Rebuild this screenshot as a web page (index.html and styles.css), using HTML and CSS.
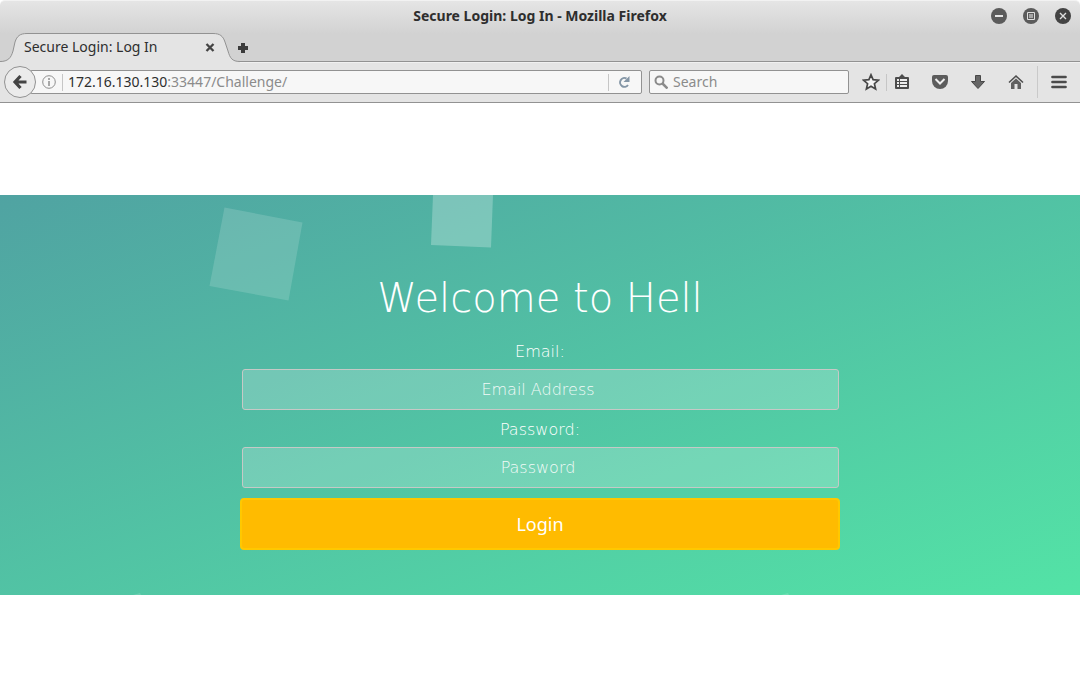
FILE: index.html
```html
<!DOCTYPE html>
<html lang="en">
<head>
<meta charset="utf-8">
<title>Secure Login: Log In</title>
<link rel="stylesheet" href="styles.css">
</head>
<body>
<header class="browser">
  <div class="top">
    <div class="titlebar">
      <span class="window-title">Secure Login: Log In - Mozilla Firefox</span>
      <div class="window-buttons">
        <button class="bare" aria-label="Minimize"><svg width="16" height="16"><circle cx="8" cy="8" r="8" fill="#5b5b5b"/><path d="M4 8h8" stroke="#e6e6e6" stroke-width="2"/></svg></button>
        <button class="bare" aria-label="Maximize"><svg width="16" height="16"><circle cx="8" cy="8" r="8" fill="#5b5b5b"/><path d="M4.500 4.500h7v7h-7z" fill="none" stroke="#e0e0e0"/><path d="M6 6h4v4H6z" fill="#a5a5a5"/></svg></button>
        <button class="bare" aria-label="Close window"><svg width="16" height="16"><circle cx="8" cy="8" r="8" fill="#434343"/><path d="M5 5l6 6M11 5l-6 6" stroke="#e0e0e0" stroke-width="1.400"/></svg></button>
      </div>
    </div>
    <div class="tabs">
      <div class="tab">
        <svg class="tab-shape" viewBox="0 0 240 30" width="240" height="30"><path d="M0 28.500C8 28.500 11 25 13 18L15 9C17 3 20 .5 27 .5H213C220 .5 223 3 225 9L228 18C230 25 232 28.500 240 28.500V30H0Z" fill="#e4e4e4"/><path d="M0 28.500C8 28.500 11 25 13 18L15 9C17 3 20 .5 27 .5H213C220 .5 223 3 225 9L228 18C230 25 232 28.500 240 28.500" fill="none" stroke="#929292"/></svg>
        <span class="tab-title">Secure Login: Log In</span>
        <button class="bare" aria-label="Close tab"><svg width="10" height="10"><path d="M1.500 2l7 7M8.500 2l-7 7" stroke="#444" stroke-width="2.300"/></svg></button>
      </div>
      <button class="bare" aria-label="New tab"><svg width="12" height="12"><path d="M4 2h4v3h3v4H8v3H4V9H1V5h3z" fill="#3b3b3b"/></svg></button>
    </div>
  </div>
  <div class="toolbar">
    <button class="back" aria-label="Back"><svg width="16" height="16"><path d="M8.500 2L3 8l5.500 6M3 8h11.500" fill="none" stroke="#444" stroke-width="3.200"/></svg></button>
    <div class="address">
      <svg width="14" height="14"><circle cx="7" cy="7" r="6.300" fill="none" stroke="#8e8e8e"/><path d="M7 3v2M7 6v5" stroke="#8e8e8e" stroke-width="1.500"/></svg>
      <span class="divider"></span>
      <a class="url" href="#"><b>172.16.130.130</b>:33447/Challenge/</a>
      <span class="divider"></span>
      <button class="bare reload" aria-label="Reload"><svg width="14" height="14"><path d="M11 10A4.400 4.400 0 1 1 9.500 3.500" fill="none" stroke="#8496a6" stroke-width="2"/><path d="M12.500 1v6H6.500z" fill="#8496a6"/></svg></button>
    </div>
    <label class="search">
      <svg width="14" height="14"><circle cx="5.500" cy="5.500" r="4" fill="none" stroke="#8b8b8b" stroke-width="2"/><path d="M8.500 8.500l5 5" stroke="#8b8b8b" stroke-width="2.500"/></svg>
      <input type="text" placeholder="Search" aria-label="Search">
    </label>
    <nav class="tools">
      <button class="bare" aria-label="Bookmark"><svg width="18" height="18"><path d="M9 1.800l2.100 4.900 5.300.5-4 3.500 1.200 5.200L9 13.200l-4.600 2.700 1.200-5.200-4-3.500 5.300-.5z" fill="#f4f4f4" stroke="#474747" stroke-width="1.700"/></svg></button>
      <span class="divider"></span>
      <button class="bare" aria-label="Bookmarks list"><svg width="16" height="16"><path d="M1 4q0-1 1-1h3l3-3 3 3h3q1 0 1 1v10q0 1-1 1H2q-1 0-1-1z" fill="#4c4c4c"/><path d="M3 5h10v8H3z" fill="#ededed"/><path d="M3 7.500h10M3 10.500h10M5.500 5v8" stroke="#4c4c4c"/></svg></button>
      <button class="bare" aria-label="Pocket"><svg width="16" height="16"><path d="M2 1h12q2 0 2 2v4a8 8 0 0 1-16 0V3q0-2 2-2z" fill="#5c5c5c"/><path d="M3.500 5l4.500 4.500L12.500 5" fill="none" stroke="#eee" stroke-width="2"/></svg></button>
      <button class="bare" aria-label="Downloads"><svg width="16" height="16"><path d="M5.500 1.500h5v6h4L8 14.500 1.500 7.500h4z" fill="#666" stroke="#474747"/></svg></button>
      <button class="bare" aria-label="Home"><svg width="16" height="16"><path d="M1 8.500l7-6.500 7 6.500" fill="none" stroke="#4d4d4d" stroke-width="1.600"/><path d="M3 9l5-4.500L13 9v6H9.500v-5h-3v5H3z" fill="#606060"/></svg></button>
      <button class="bare menu" aria-label="Menu"><svg width="16" height="14"><path d="M1.500 2h13M1.500 7h13M1.500 12h13" stroke="#4b4b4b" stroke-width="2.700" stroke-linecap="round"/></svg></button>
    </nav>
  </div>
</header>
<main class="page">
  <section class="hero">
    <svg class="squares" width="100%" height="100%" aria-hidden="true">
      <path d="M224.500 12.500l78 15-14 78-79-14.500z" fill="#fff" fill-opacity=".15"/>
      <path d="M433 0h60l-2 52.500-60-2.500z" fill="#fff" fill-opacity=".25"/>
      <path d="M133 400l7-2 1 2zM781 400l7-2 1 2z" fill="#fff" fill-opacity=".15"/>
    </svg>
    <form class="login">
      <h1>Welcome to Hell</h1>
      <label for="email">Email:</label>
      <input id="email" type="email" placeholder="Email Address">
      <label for="password">Password:</label>
      <input id="password" type="password" placeholder="Password">
      <button type="button">Login</button>
    </form>
  </section>
</main>
</body>
</html>
```
FILE: styles.css
```css
* { box-sizing: border-box; }
body { margin: 0; background: #fff; font-family: "Noto Sans", sans-serif; font-size: 14px; color: #2e2e2e; }
.bare { display: flex; align-items: center; justify-content: center; padding: 0; border: 0; background: none; }
svg { display: block; flex: none; }
.top { height: 62px; background: linear-gradient(#e5e5e5, #d2d2d2 55%, #d2d2d2); border-top: 1px solid #f2f2f2; border-bottom: 1px solid #929292; border-radius: 5px 5px 0 0; }
.titlebar { display: grid; grid-template-columns: 1fr auto 1fr; align-items: center; height: 30px; padding: 0 9px; }
.window-title { grid-column: 2; font-weight: 700; line-height: 18px; }
.window-buttons { display: flex; justify-content: flex-end; gap: 16px; }
.tabs { display: flex; align-items: center; height: 31px; }
.tab { position: relative; display: flex; align-items: center; justify-content: space-between; width: 237px; height: 31px; padding: 0 22px 0 24px; }
.tab-shape { position: absolute; left: 0; top: 2px; }
.tab-title, .tab button { position: relative; }
.toolbar { display: flex; align-items: center; height: 41px; padding: 0 13px 1px 4px; background: #e4e4e4; border-top: 1px solid #f0f0f0; border-bottom: 1px solid #929292; }
.back { position: relative; display: flex; align-items: center; justify-content: center; width: 32px; height: 32px; padding: 0; border: 1px solid #929292; border-radius: 50%; background: #ebebeb; }
.address { display: flex; flex: 1; align-items: center; gap: 6px; height: 24px; margin: 0 7px 0 -6px; padding: 0 10px 0 11px; border: 1px solid #929292; border-radius: 2px; background: #f7f7f7; }
.divider { width: 1px; height: 17px; background: #c6c6c6; }
.url { flex: 1; margin-left: -1px; color: #8b8b8b; line-height: 18px; padding-bottom: 1px; text-decoration: none; }
.url b { color: #2e2e2e; font-weight: 400; }
.reload { margin-left: 2px; }
.search { display: flex; align-items: center; gap: 5px; width: 200px; height: 24px; padding: 0 4px; border: 1px solid #929292; border-radius: 2px; background: #f7f7f7; }
.search input { width: 100%; padding: 0 0 2px; border: 0; background: none; font: inherit; }
.search input::placeholder { color: #8b8b8b; }
.tools { display: flex; align-items: center; gap: 22px; margin-left: 13px; }
.tools .divider { margin: 0 -15px 0 -16px; }
.menu { height: 32px; padding-left: 13px; margin-left: -9px; border-left: 1px solid #c9c9c9; }
.page { padding: 92px 0; }
.hero { position: relative; overflow: hidden; min-height: 400px; padding: 74px 24px 45px; background: linear-gradient(to bottom right, #50a3a2 0%, #53e3a6 100%); }
.squares { position: absolute; inset: 0; }
.login { position: relative; display: flex; flex-direction: column; max-width: 600px; margin: 0 auto; color: #fff; font-family: "DejaVu Sans", sans-serif; font-size: 16px; font-weight: 200; text-align: center; }
.login h1 { margin: 0 0 12px; font-size: 40px; font-weight: 200; line-height: 58px; }
.login label { line-height: 26px; }
.login input { height: 41px; margin: 4px 1px 7px 2px; padding: 0 15px 0 10px; border: 1px solid #c6c9c6; border-radius: 3px; background: rgba(255, 255, 255, .2); color: #fff; font: inherit; text-align: center; }
.login input::placeholder { color: #fff; opacity: .9; }
.login button { height: 52px; margin-top: 3px; border: 2px solid #ffc800; border-radius: 4px; background: #ffbb00; color: #fff; font-family: "Noto Sans", sans-serif; font-size: 18px; font-weight: 400; }
```
